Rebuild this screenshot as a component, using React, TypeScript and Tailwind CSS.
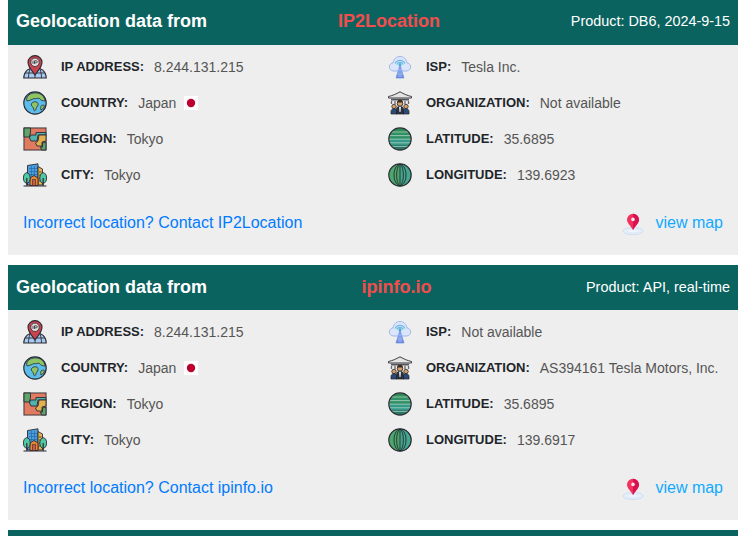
import React from "react";

function IpIcon() {
  return (
    <svg width="24" height="24" viewBox="0 0 24 24" className="shrink-0">
      <path d="M0.8 23 C1 16 6 12.5 12 12.5 C18 12.5 23 16 23.2 23 Z" fill="#a9c8ee" stroke="#2b2b33" strokeWidth="1.2" />
      <path d="M12 12.5 V23 M7 14 C6 17 5.5 20 5.5 23 M17 14 C18 17 18.5 20 18.5 23 M2.2 18 H21.8" stroke="#2b2b33" strokeWidth="0.9" fill="none" />
      <path d="M12 20 C9 15.5 5 12 5 7.2 A7 6.6 0 0 1 19 7.2 C19 12 15 15.5 12 20 Z" fill="#c9434f" stroke="#2b2b33" strokeWidth="1.1" />
      <circle cx="12" cy="7.3" r="4.2" fill="#e3dcdc" stroke="#2b2b33" strokeWidth="0.8" />
      <path d="M10 5.8 V8.9 M11.5 8.9 V5.8 H13.3 A1 1 0 0 1 13.3 7.8 H11.5" stroke="#2b2b33" strokeWidth="0.8" fill="none" />
    </svg>
  );
}

function GlobeIcon() {
  return (
    <svg width="24" height="24" viewBox="0 0 24 24" className="shrink-0">
      <circle cx="12" cy="12" r="11.2" fill="#5cbdea" stroke="#2b2b33" strokeWidth="1.2" />
      <path d="M6 3.8 C9 1.5 15 1 19 4 C21 6 22 8 21.8 10 C19.5 9.8 18 9.5 16.5 7.5 C14.5 6.5 13 8.5 11 7.5 C9.5 8.2 7 9.5 4 10 C3 8 4 5.5 6 3.8 Z" fill="#8fc465" stroke="#2b2b33" strokeWidth="0.8" />
      <path d="M9.5 11.5 C11.5 10.3 14.5 10.5 15 12.5 C15.8 14.5 13.5 15.5 13.2 17.5 C12.8 19.5 11.5 20.5 11 19.2 C10.6 17.5 10.2 16 8.8 15 C8 13.8 8.3 12.4 9.5 11.5 Z" fill="#8fc465" stroke="#2b2b33" strokeWidth="0.8" />
      <path d="M18.5 14.5 C19.5 14 21 14 21.6 14.7 C21 16.5 19.7 18.3 18 19 C17.4 17.3 17.6 15.7 18.5 14.5 Z" fill="#8fc465" stroke="#2b2b33" strokeWidth="0.8" />
    </svg>
  );
}

function RegionIcon() {
  return (
    <svg width="24" height="24" viewBox="0 0 24 24" className="shrink-0">
      <rect x="0" y="0" width="24" height="24" fill="#cfcfcf" />
      <rect x="1" y="1" width="22" height="22" fill="#e07a60" stroke="#2b2b33" strokeWidth="0.8" />
      <path d="M1 1 H7.5 V5 L6.5 10 H1 Z" fill="#5fa56b" stroke="#2b2b33" strokeWidth="0.9" />
      <path d="M7.5 8 H13 V5.5 H23 V8 H15 L14 14 H8 L6.5 11 Z" fill="#4fb3b0" stroke="#2b2b33" strokeWidth="0.9" />
      <path d="M16 8 H23 V14 L19 15 V19 H14 L12.5 16 L15 14 Z" fill="#e3b04f" stroke="#2b2b33" strokeWidth="0.9" />
      <path d="M19.5 16 L23 15 V23 H18.5 L17.5 20 H19.5 Z" fill="#5fa56b" stroke="#2b2b33" strokeWidth="0.9" />
    </svg>
  );
}

function CityIcon() {
  return (
    <svg width="24" height="24" viewBox="0 0 24 24" className="shrink-0">
      <path d="M4.5 22 V2.5 L15 0.8 V22 Z" fill="#4a9fe0" stroke="#2b2b33" strokeWidth="0.9" />
      <path d="M6 5.5 H14 M6 8.5 H14 M6 11.5 H14 M8.5 3 V13 M11.5 3 V13" stroke="#2b6fa8" strokeWidth="0.8" />
      <path d="M15 3.5 L19.5 6 V22 H15 Z" fill="#e8b34e" stroke="#2b2b33" strokeWidth="0.9" />
      <path d="M16 9 H18.5 M16 12 H18.5 M16 15 H18.5 M16 18 H18.5" stroke="#2b2b33" strokeWidth="0.8" />
      <path d="M7 22.5 V15 L11 12.5 L15 15 V22.5 Z" fill="#ea8636" stroke="#2b2b33" strokeWidth="0.9" />
      <path d="M9.5 22.5 V16.5 H12.5 V22.5" fill="#d9583b" stroke="#2b2b33" strokeWidth="0.6" />
      <ellipse cx="3.8" cy="15" rx="3.4" ry="5.3" fill="#4fc9a4" stroke="#2b2b33" strokeWidth="0.9" />
      <ellipse cx="20.2" cy="15" rx="3.4" ry="5.3" fill="#4fc9a4" stroke="#2b2b33" strokeWidth="0.9" />
      <path d="M3.8 15 V22.5 M20.2 15 V22.5 M0.5 23 H23.5" stroke="#2b2b33" strokeWidth="1.2" />
    </svg>
  );
}

function IspIcon() {
  return (
    <svg width="24" height="24" viewBox="0 0 24 24" className="shrink-0">
      <path d="M6 16 C2.5 16 1 13.5 1.5 11 C2 9 3.5 8 5 8 C5.5 4 8.5 1.5 12 1.5 C15.5 1.5 18.5 4 19 8 C20.5 8 22 9 22.5 11 C23 13.5 21.5 16 18 16 Z" fill="#dbe6fb" stroke="#9db6ee" strokeWidth="1" />
      <path d="M7 8.5 A5.5 5.5 0 0 1 17 8.5 M8.8 9.5 A3.5 3.5 0 0 1 15.2 9.5" stroke="#6fb7e8" strokeWidth="1.2" fill="none" />
      <circle cx="12" cy="9.5" r="1.5" fill="#47c0c8" />
      <path d="M12 10 L8 23 H16 Z" fill="#6f8fe6" stroke="#5f7fdc" strokeWidth="0.6" />
      <path d="M10.5 15 H13.5 M9.5 19 H14.5 M11 12 V22 M13 12 V22" stroke="#a9c6f6" strokeWidth="0.7" />
    </svg>
  );
}

function OrgIcon() {
  return (
    <svg width="24" height="24" viewBox="0 0 24 24" className="shrink-0">
      <path d="M0.5 5.5 C5 4.5 8 3 12 0.8 C16 3 19 4.5 23.5 5.5 L23.5 7 H0.5 Z" fill="#e4e4e4" stroke="#2b2b33" strokeWidth="0.9" />
      <path d="M3 8.6 H21" stroke="#555" strokeWidth="1.8" />
      <path d="M3.5 10 V13 M7 10 V13 M17 10 V13 M20.5 10 V13" stroke="#666" strokeWidth="1.3" />
      <circle cx="6" cy="15.5" r="2.2" fill="#d9a066" stroke="#2b2b33" strokeWidth="0.8" />
      <circle cx="18" cy="15.5" r="2.2" fill="#d9a066" stroke="#2b2b33" strokeWidth="0.8" />
      <path d="M3 23 V20.5 C3 18.5 4.5 17.7 6 17.7 C7.5 17.7 9 18.5 9 20.5 V23 Z" fill="#2c4a78" stroke="#1f1f28" strokeWidth="0.7" />
      <path d="M15 23 V20.5 C15 18.5 16.5 17.7 18 17.7 C19.5 17.7 21 18.5 21 20.5 V23 Z" fill="#2c4a78" stroke="#1f1f28" strokeWidth="0.7" />
      <circle cx="12" cy="12.5" r="2.8" fill="#d9a066" stroke="#2b2b33" strokeWidth="0.9" />
      <path d="M9.2 11.5 A2.8 2.8 0 0 1 14.8 11.5 Z" fill="#3a2a22" />
      <path d="M8.5 23 V18.5 C8.5 16 10 15.5 12 15.5 C14 15.5 15.5 16 15.5 18.5 V23 Z" fill="#28323f" stroke="#1f1f28" strokeWidth="0.7" />
      <path d="M11 15.7 H13 L12.5 21 H11.5 Z" fill="#e9e9e9" />
    </svg>
  );
}

function LatIcon() {
  return (
    <svg width="24" height="24" viewBox="0 0 24 24" className="shrink-0">
      <defs>
        <clipPath id="latc">
          <circle cx="12" cy="12" r="11" />
        </clipPath>
      </defs>
      <g clipPath="url(#latc)">
        <rect x="0" y="0" width="24" height="6" fill="#2f8a58" />
        <rect x="0" y="6" width="24" height="6" fill="#338f68" />
        <rect x="0" y="12" width="24" height="6" fill="#35988a" />
        <rect x="0" y="18" width="24" height="6" fill="#2c7466" />
        <path d="M0 5 H24 M0 8.6 H24 M0 12.2 H24 M0 15.8 H24 M0 19.4 H24" stroke="#a8d8bd" strokeWidth="0.8" />
      </g>
      <circle cx="12" cy="12" r="11.2" fill="none" stroke="#2b2b33" strokeWidth="1.2" />
    </svg>
  );
}

function LngIcon() {
  return (
    <svg width="24" height="24" viewBox="0 0 24 24" className="shrink-0">
      <circle cx="12" cy="12" r="11.2" fill="#4fa56e" />
      <path d="M12 1 A11 11 0 0 1 12 23 Z" fill="#45a58f" />
      <path d="M12 1 V23 M12 1 C7.5 4 7.5 20 12 23 M12 1 C4 3 4 21 12 23 M12 1 C16.5 4 16.5 20 12 23 M12 1 C20 3 20 21 12 23" fill="none" stroke="#20302c" strokeWidth="0.9" />
      <circle cx="12" cy="12" r="11.2" fill="none" stroke="#2b2b33" strokeWidth="1.2" />
    </svg>
  );
}

function PinIcon() {
  return (
    <svg width="24" height="24" viewBox="0 0 24 24" className="shrink-0">
      <ellipse cx="12" cy="20" rx="10" ry="3.6" fill="#e6eff9" stroke="#c5daf2" strokeWidth="0.8" />
      <ellipse cx="12" cy="20" rx="5.5" ry="1.9" fill="#eff4fa" stroke="#d3e2f4" strokeWidth="0.6" />
      <path d="M12 19 C10 15.5 6 12 6 8.8 A6 6 0 0 1 18 8.8 C18 12 14 15.5 12 19 Z" fill="#f4305f" />
      <path d="M12 2.8 A6 6 0 0 1 18 8.8 C18 12 14 15.5 12 19 Z" fill="#d8124f" />
      <circle cx="12" cy="8.4" r="1.8" fill="#f3e9ee" />
    </svg>
  );
}

function Flag() {
  return (
    <svg width="14" height="14" viewBox="0 0 14 14" className="ml-[8px] shrink-0">
      <rect width="14" height="14" fill="#ffffff" />
      <circle cx="7" cy="7" r="4.2" fill="#bc002d" />
    </svg>
  );
}

function Row({ icon, label, value, flag }: { icon: React.ReactNode; label: string; value: string; flag?: boolean }) {
  return (
    <div className="flex h-9 items-center">
      <div className="mr-[14px] flex h-6 w-6 shrink-0 items-center justify-center">{icon}</div>
      <span className="mr-[10px] text-[13px] font-bold text-[#212529]">{label}</span>
      <span className="relative top-[0.5px] text-[14px] text-[#555555]">{value}</span>
      {flag && <Flag />}
    </div>
  );
}

type CardProps = {
  source: string;
  product: string;
  isp: string;
  org: string;
  lng: string;
  contact: string;
  headerClass: string;
};

function Card({ source, product, isp, org, lng, contact, headerClass }: CardProps) {
  return (
    <section className="bg-[#eeeeee]">
      <header className={`flex h-[45px] items-center justify-between bg-[#0b6360] px-2 text-white ${headerClass}`}>
        <h2 className="text-[18px] font-bold">Geolocation data from</h2>
        <span className="text-[18px] font-bold text-[#f04d4d]">{source}</span>
        <span className="text-[14.4px]">{product}</span>
      </header>
      <div className="pt-1">
        <div className="grid grid-cols-2">
          <div className="flex flex-col pl-[15px]">
            <Row icon={<IpIcon />} label="IP ADDRESS:" value="8.244.131.215" />
            <Row icon={<GlobeIcon />} label="COUNTRY:" value="Japan" flag />
            <Row icon={<RegionIcon />} label="REGION:" value="Tokyo" />
            <Row icon={<CityIcon />} label="CITY:" value="Tokyo" />
          </div>
          <div className="flex flex-col pl-[15px]">
            <Row icon={<IspIcon />} label="ISP:" value={isp} />
            <Row icon={<OrgIcon />} label="ORGANIZATION:" value={org} />
            <Row icon={<LatIcon />} label="LATITUDE:" value="35.6895" />
            <Row icon={<LngIcon />} label="LONGITUDE:" value={lng} />
          </div>
        </div>
        <div className="mt-[12px] flex h-9 items-center justify-between pl-[15px] pr-[15px] text-[16px]">
          <a className="text-[#007bff]">Incorrect location? Contact {contact}</a>
          <div className="flex items-center">
            <PinIcon />
            <a className="ml-[10px] text-[#11aaff]">view map</a>
          </div>
        </div>
        <div className="h-[14px]" />
      </div>
    </section>
  );
}

export default function App() {
  return (
    <div className="h-[536px] w-[749px] overflow-hidden bg-white font-['Liberation_Sans',Arial,sans-serif]">
      <div className="ml-2 flex w-[730px] flex-col gap-[10px]">
        <Card
          source="IP2Location"
          product="Product: DB6, 2024-9-15"
          isp="Tesla Inc."
          org="Not available"
          lng="139.6923"
          contact="IP2Location"
          headerClass="pb-[2px]"
        />
        <Card
          source="ipinfo.io"
          product="Product: API, real-time"
          isp="Not available"
          org="AS394161 Tesla Motors, Inc."
          lng="139.6917"
          contact="ipinfo.io"
          headerClass="pb-0"
        />
        <div className="h-[45px] bg-[#0b6360]" />
      </div>
    </div>
  );
}
